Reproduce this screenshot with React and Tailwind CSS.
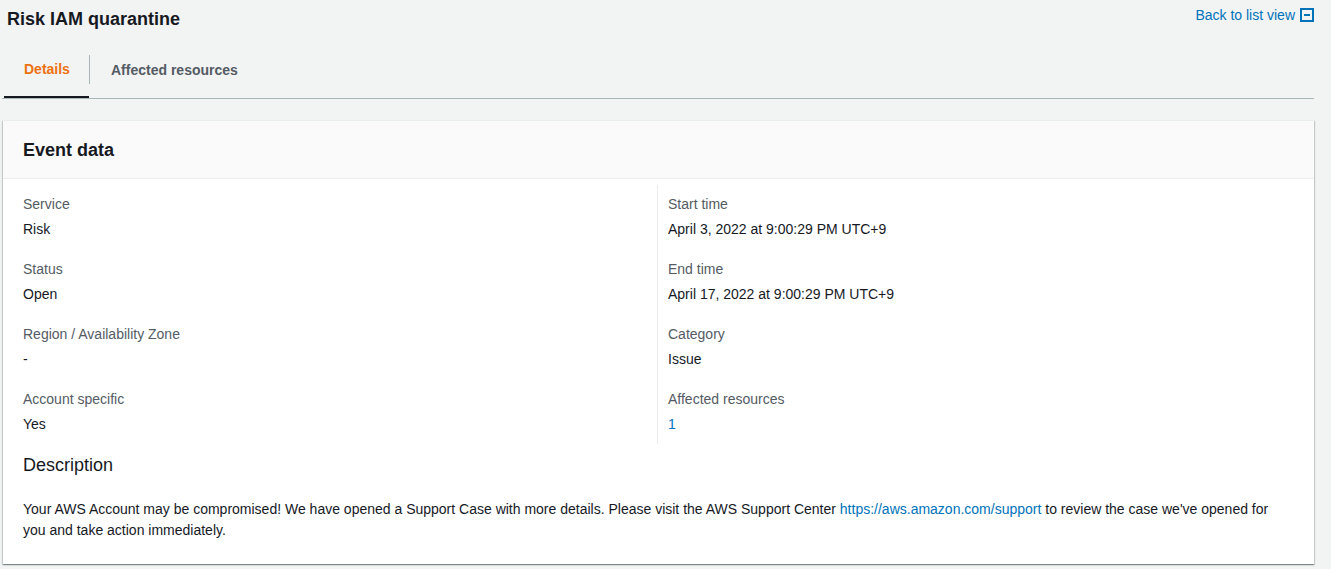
const fields = [
  [
    { label: 'Service', value: 'Risk' },
    { label: 'Status', value: 'Open' },
    { label: 'Region / Availability Zone', value: '-' },
    { label: 'Account specific', value: 'Yes' },
  ],
  [
    { label: 'Start time', value: 'April 3, 2022 at 9:00:29 PM UTC+9' },
    { label: 'End time', value: 'April 17, 2022 at 9:00:29 PM UTC+9' },
    { label: 'Category', value: 'Issue' },
    { label: 'Affected resources', value: '1', link: true },
  ],
]

function CollapseIcon() {
  return (
    <svg width="14" height="14" viewBox="0 0 14 14" className="ml-[5px]">
      <rect x="1" y="1" width="12" height="12" fill="none" stroke="#0073bb" strokeWidth="2" />
      <rect x="4" y="6" width="6" height="2" fill="#0073bb" />
    </svg>
  )
}

function Field({ label, value, link }) {
  return (
    <div className="flex flex-col gap-[5px]">
      <div className="text-[14px] leading-[20px] text-[#545b64]">{label}</div>
      <div className={`text-[14px] leading-[20px] ${link ? 'text-[#0073bb]' : 'text-[#16191f]'}`}>{value}</div>
    </div>
  )
}

export default function App() {
  return (
    <div className="min-h-screen bg-[#f2f3f3] font-['Liberation_Sans',Arial,sans-serif] text-[#16191f]">
      <div className="flex items-start justify-between pl-[7px] pr-[17px] pt-[7px]">
        <h1 className="text-[18px] leading-[24px] font-bold">Risk IAM quarantine</h1>
        <a href="#" className="flex items-center text-[14px] leading-[16px] text-[#0073bb]">
          Back to list view
          <CollapseIcon />
        </a>
      </div>

      <div className="ml-[2px] mr-[17px] mt-[10px] flex h-[58px] border-b border-[#aab7b8]">
        <div className="flex ml-[2px] w-[85px] items-center pl-[20px] pt-[2px] border-b-2 border-[#16191f] text-[14px] font-bold text-[#ec7211]">
          Details
        </div>
        <div className="flex items-center">
          <div className="h-[29px] w-px bg-[#aab7b8]" />
          <div className="pl-[21px] pt-[2px] text-[14px] font-bold text-[#545b64]">Affected resources</div>
        </div>
      </div>

      <div className="ml-[3px] mr-[17px] mt-[21px] bg-white shadow-[0_1px_1px_0_rgba(0,28,36,0.3),1px_1px_1px_0_rgba(0,28,36,0.15),-1px_1px_1px_0_rgba(0,28,36,0.15)] border-t border-[#eaeded]">
        <div className="h-[58px] flex items-center px-[20px] bg-[#fafafa] border-b border-[#eaeded]">
          <h2 className="text-[18px] leading-[24px] font-bold">Event data</h2>
        </div>
        <div className="px-[20px] pt-[6px] pb-[23px]">
          <div className="grid grid-cols-[634px_1fr]">
            {fields.map((col, i) => (
              <div
                key={i}
                className={`flex flex-col gap-[20px] pt-[9px] pb-[10px] ${i === 1 ? 'border-l border-[#eaeded] pl-[10px]' : ''}`}
              >
                {col.map(f => <Field key={f.label} {...f} />)}
              </div>
            ))}
          </div>
          <h3 className="mt-[9px] text-[18px] leading-[24px]">Description</h3>
          <p className="mt-[22px] text-[14px] leading-[21px]">
            Your AWS Account may be compromised! We have opened a Support Case with more details. Please visit the AWS Support Center{' '}
            <a href="#" className="text-[#0073bb]">https://aws.amazon.com/support</a>
            {' '}to review the case we've opened for you and take action immediately.
          </p>
        </div>
      </div>
    </div>
  )
}
